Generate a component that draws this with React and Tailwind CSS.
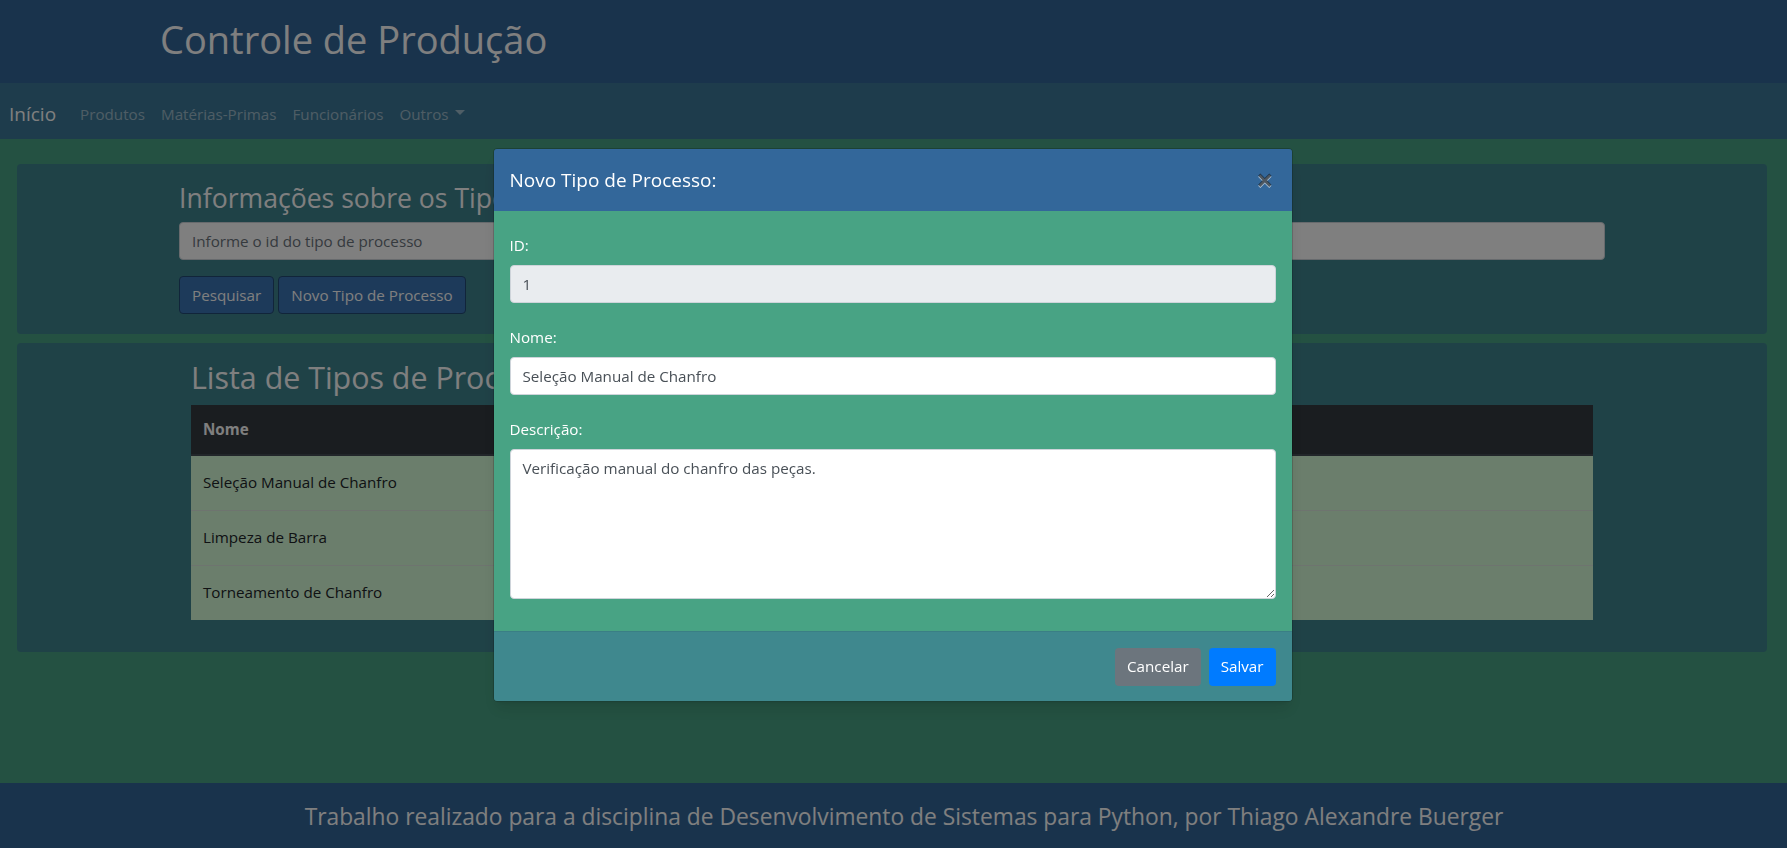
import { useState } from "react";

const navLinks = ["Produtos", "Matérias-Primas", "Funcionários"];

const processTypes = [
  { id: 1, nome: "Seleção Manual de Chanfro" },
  { id: 2, nome: "Limpeza de Barra" },
  { id: 3, nome: "Torneamento de Chanfro" },
];

function Navbar() {
  return (
    <nav className="flex h-[56px] items-center bg-[#3c7898] pl-[9px] pt-[5px]">
      <a href="#" className="mr-4 text-[19px] leading-[30px] text-white no-underline">
        Início
      </a>
      <ul className="flex items-center">
        {navLinks.map((link) => (
          <li key={link}>
            <a href="#" className="block px-2 text-[15.2px] leading-6 text-white/50">
              {link}
            </a>
          </li>
        ))}
        <li>
          <a href="#" className="flex items-center px-2 text-[15.2px] leading-6 text-white/50">
            Outros
            <span className="ml-[6px] mb-[3px] inline-block h-0 w-0 border-x-[5px] border-t-[5px] border-x-transparent border-t-white/50" />
          </a>
        </li>
      </ul>
    </nav>
  );
}

function SearchCard() {
  return (
    <section className="ml-[17px] mr-[20px] mt-[25px] rounded-[4px] bg-[#3f848f] px-[162px] pb-5 pt-4">
      <h3 className="mb-2 pt-[3px] text-[26.6px] font-normal leading-[31px] text-white">
        Informações sobre os Tipos de Processo
      </h3>
      <input
        type="text"
        placeholder="Informe o id do tipo de processo"
        className="block h-[38px] w-full rounded-[4px] border border-[#ced4da] bg-white px-3 text-[15.2px] text-[#495057] placeholder:text-[#6c757d]"
      />
      <div className="mt-4 flex gap-1">
        <button className="h-[38px] rounded-[4px] border border-[#234b74] bg-[#3a74b4] px-3 text-[15.2px] text-white">
          Pesquisar
        </button>
        <button className="h-[38px] rounded-[4px] border border-[#234b74] bg-[#3a74b4] px-3 text-[15.2px] text-white">
          Novo Tipo de Processo
        </button>
      </div>
    </section>
  );
}

function ListCard() {
  return (
    <section className="ml-[17px] mr-[20px] mt-[9px] rounded-[4px] bg-[#3f848f] px-[174px] pb-8 pt-4">
      <h2 className="mb-2 h-[38px] text-[30.4px] font-normal leading-[38px] text-white">
        Lista de Tipos de Processo
      </h2>
      <table className="w-full border-collapse text-left text-[15.2px]">
        <thead>
          <tr className="bg-[#343a40]">
            <th className="h-[50px] border-b-2 border-[#454d55] px-3 font-bold text-white">Nome</th>
            <th className="h-[50px] border-b-2 border-[#454d55] px-3 font-bold text-white">Descrição</th>
            <th className="h-[50px] border-b-2 border-[#454d55] px-3" />
          </tr>
        </thead>
        <tbody>
          {processTypes.map((item, index) => (
            <tr key={item.id} className={index ? "border-t border-[#dde9de] bg-[#d6fcd8]" : "bg-[#d6fcd8]"}>
              <td className="h-[55px] px-3 text-[#212529]">{item.nome}</td>
              <td className="h-[55px] px-3 text-[#212529]" />
              <td className="h-[55px] px-3" />
            </tr>
          ))}
        </tbody>
      </table>
    </section>
  );
}

function ProcessModal() {
  const [nome, setNome] = useState("Seleção Manual de Chanfro");
  const [descricao, setDescricao] = useState("Verificação manual do chanfro das peças.");

  return (
    <div className="fixed inset-0 z-50">
      <div className="absolute inset-0 bg-black/50" />
      <div className="relative mx-auto mt-[148px] w-[800px] -translate-x-[1px] overflow-hidden rounded-[4px] border border-black/20 shadow-lg">
        <div className="flex h-[62px] items-center justify-between bg-[#33679a] pl-4 pr-[18px]">
          <h5 className="text-[19px] font-normal leading-[30px] text-white">Novo Tipo de Processo:</h5>
          <button className="text-[30px] font-bold leading-none text-black/55 [text-shadow:0_1px_0_rgba(255,255,255,0.6)]">
            ×
          </button>
        </div>
        <div className="bg-[#48a384] px-4 pb-4 pt-4">
          <div className="mb-4">
            <label className="mb-2 block pt-[6px] text-[15.2px] leading-6 text-white">ID:</label>
            <input
              type="text"
              readOnly
              value="1"
              className="block h-[38px] w-full rounded-[4px] border border-[#ced4da] bg-[#e9ecef] px-3 text-[15.2px] text-[#495057]"
            />
          </div>
          <div className="mb-4">
            <label className="mb-2 block pt-[6px] text-[15.2px] leading-6 text-white">Nome:</label>
            <input
              type="text"
              value={nome}
              onChange={(event) => setNome(event.target.value)}
              className="block h-[38px] w-full rounded-[4px] border border-[#ced4da] bg-white px-3 text-[15.2px] text-[#495057]"
            />
          </div>
          <div className="mb-4">
            <label className="mb-2 block pt-[6px] text-[15.2px] leading-6 text-white">Descrição:</label>
            <textarea
              value={descricao}
              onChange={(event) => setDescricao(event.target.value)}
              className="block h-[150px] w-full rounded-[4px] border border-[#ced4da] bg-white px-3 py-[6px] text-[15.2px] leading-6 text-[#495057]"
            />
          </div>
        </div>
        <div className="flex h-[70px] items-center justify-end gap-2 border-t border-[#3a7f85] bg-[#3f888e] px-4">
          <button className="h-[38px] rounded-[4px] bg-[#6c757d] px-3 text-[15.2px] text-white">Cancelar</button>
          <button className="h-[38px] rounded-[4px] bg-[#007bff] px-3 text-[15.2px] text-white">Salvar</button>
        </div>
      </div>
    </div>
  );
}

export default function App() {
  return (
    <div className="flex h-[848px] flex-col overflow-hidden bg-[#48a384] font-['Open_Sans',sans-serif]">
      <header className="flex h-[83px] items-center bg-[#336699] pb-[6px] pl-[160px]">
        <h1 className="text-[38px] font-normal leading-[46px] text-white">Controle de Produção</h1>
      </header>
      <Navbar />
      <main className="flex-1">
        <SearchCard />
        <ListCard />
      </main>
      <footer className="flex h-[65px] items-center justify-center bg-[#336699] pl-[21px] pt-[3px]">
        <p className="text-[22.8px] text-white">
          Trabalho realizado para a disciplina de Desenvolvimento de Sistemas para Python, por Thiago Alexandre Buerger
        </p>
      </footer>
      <ProcessModal />
    </div>
  );
}
